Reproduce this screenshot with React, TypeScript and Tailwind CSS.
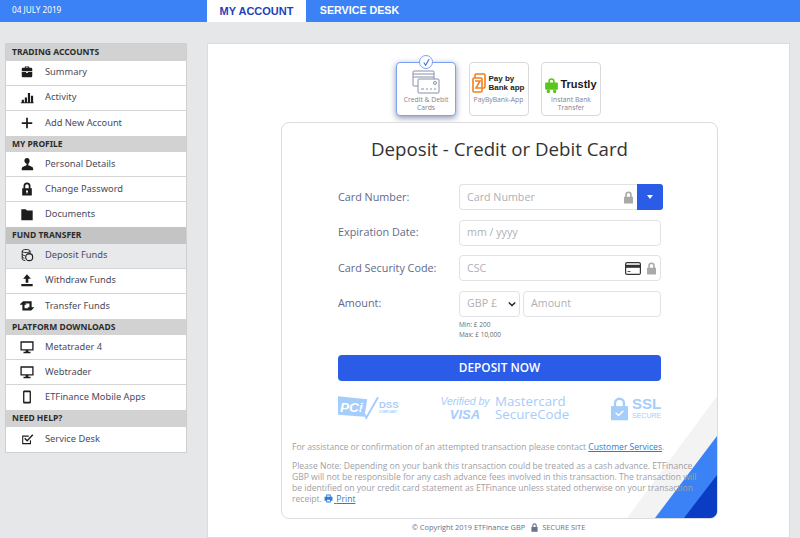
import React from "react";

const Ico = ({ children }: { children: React.ReactNode }) => (
  <svg viewBox="0 0 16 16" className="w-[14px] h-[14px]" fill="#1c1c1c">{children}</svg>
);

const icons: Record<string, React.ReactNode> = {
  case: <Ico><path d="M5.500 3V1.800h5V3H12.500c.8 0 1.500.7 1.500 1.500V7H2V4.500C2 3.700 2.700 3 3.500 3zM6.700 3h2.600v-.4H6.700zM2 8h5v1.200h2V8h5v4.500c0 .8-.7 1.500-1.500 1.500h-9C2.700 14 2 13.300 2 12.500z" /></Ico>,
  chart: <Ico><path d="M1 14h14.500v1H1zM2 11h2.500v3H2zM5.500 8.500H8V14H5.500zM9 3.500h2.500V14H9zM12.500 6.500H15V14h-2.500z" /></Ico>,
  plus: <Ico><path d="M7 2h2v5h5v2H9v5H7V9H2V7h5z" /></Ico>,
  user: <Ico><path d="M8 1c1.900 0 3 1.300 3 3.200 0 1.500-.7 2.800-1.500 3.500v1.800l4 1.700c.9.4 1.500 1.300 1.500 2.300V15H2v-1.500c0-1 .6-1.900 1.500-2.300l4-1.700V7.700C6.200 7 5 5.700 5 4.200 5 2.300 6.100 1 8 1z" /></Ico>,
  lock: <Ico><path fillRule="evenodd" d="M8 .5a4 4 0 0 1 4 4V7h1.500v8.500h-11V7H4V4.500a4 4 0 0 1 4-4zm0 2a2 2 0 0 0-2 2V7h4V4.500a2 2 0 0 0-2-2zm0 7a1.200 1.200 0 0 0-.6 2.200v1.300h1.200v-1.300A1.200 1.200 0 0 0 8 9.500z" /></Ico>,
  folder: <Ico><path d="M1.500 2.500h5L8 4h6.500v11h-13z" /></Ico>,
  coins: <Ico><path fill="none" stroke="#1c1c1c" strokeWidth="1.100" d="M2.500 3.500c0-1 2-1.800 4.500-1.800s4.500.8 4.500 1.800V6c0 .5-.6 1-1.500 1.300M2.500 3.500c0 1 2 1.800 4.500 1.800s4.500-.8 4.500-1.800M2.500 3.500v9c0 .9 1.500 1.600 3.500 1.800M2.500 7c0 .8 1.200 1.400 3 1.700M2.500 10c0 .7 1 1.300 2.500 1.600" /><circle cx="10.500" cy="10.500" r="4" fill="none" stroke="#1c1c1c" strokeWidth="1.300" /></Ico>,
  upload: <Ico><path d="M8 1.500l4.500 5H9.500V11h-3V6.500h-3zM1.500 12.500h13V15h-13z" /></Ico>,
  retweet: <Ico><path d="M3.500 2.500L7.500 6.500H5.200V10.500H11L13 13H2.700V6.500H-.5zM3.500 2.500H13.300V9.500H16.500L12.500 13.500 8.500 9.500H10.800V5H6z" /></Ico>,
  monitor: <Ico><path fillRule="evenodd" d="M.5 1.500h15V12h-6v1.500H12V15H4v-1.500h2.500V12h-6zM2 3v7.500h12V3z" /></Ico>,
  phone: <Ico><path fillRule="evenodd" d="M5 .5h6c.8 0 1.500.7 1.500 1.500v12c0 .8-.7 1.500-1.500 1.500H5c-.8 0-1.500-.7-1.500-1.500V2C3.500 1.200 4.200.5 5 .5zm0 2v11h6v-11z" /></Ico>,
  check: <Ico><path fillRule="evenodd" d="M2.500 4H10v1.300H3.700v7.400h7.600V9.500h1.300V14H2.500zM14 2.500l1.200 1.100-7 7.400-3.400-3.300 1.100-1.100 2.300 2.200z" /></Ico>,
};

const groups = [
  { title: "TRADING ACCOUNTS", bg: "bg-[#d2d2d2]", items: [["case", "Summary"], ["chart", "Activity"], ["plus", "Add New Account"]] },
  { title: "MY PROFILE", bg: "bg-[#d2d2d2]", items: [["user", "Personal Details"], ["lock", "Change Password"], ["folder", "Documents"]] },
  { title: "FUND TRANSFER", bg: "bg-[#c4c4c4]", items: [["coins", "Deposit Funds"], ["upload", "Withdraw Funds"], ["retweet", "Transfer Funds"]] },
  { title: "PLATFORM DOWNLOADS", bg: "bg-[#d2d2d2]", items: [["monitor", "Metatrader 4"], ["monitor", "Webtrader"], ["phone", "ETFinance Mobile Apps"]] },
  { title: "NEED HELP?", bg: "bg-[#d2d2d2]", items: [["check", "Service Desk"]] },
];

const Lock = ({ className = "w-[12px] h-[12px]", color = "#a9a9a9" }: { className?: string; color?: string }) => (
  <svg viewBox="0 0 16 16" className={className} fill={color}><path fillRule="evenodd" d="M8 .5a4 4 0 0 1 4 4V7h1.500v8.500h-11V7H4V4.500a4 4 0 0 1 4-4zm0 2a2 2 0 0 0-2 2V7h4V4.500a2 2 0 0 0-2-2z" /></svg>
);

const Sidebar = () => (
  <aside className="w-[182px] shrink-0 border border-[#cfcfcf] font-['Noto_Sans',sans-serif]">
    {groups.map((g) => (
      <div key={g.title}>
        <div className={`h-[16.500px] ${g.bg} pl-[6px] text-[8.500px] font-bold leading-[16.500px] text-[#2c2c2c]`}>{g.title}</div>
        {g.items.map(([icon, label]) => (
          <div
            key={label}
            className={`flex h-[25px] items-center border-b border-[#d4d4d4] pb-[1px] last:border-b-0 ${label === "Deposit Funds" ? "bg-[#e8e9eb]" : "bg-white"}`}
          >
            <span className="ml-[10px] flex w-[21px] justify-center">{icons[icon]}</span>
            <span className="ml-[8px] text-[9.300px] text-[#4a4a5c]">{label}</span>
          </div>
        ))}
      </div>
    ))}
  </aside>
);

const MethodCard = ({ active, label, children }: { active?: boolean; label: string; children: React.ReactNode }) => (
  <div
    className={`relative flex h-[54px] w-[60px] flex-col items-center rounded-[4px] border bg-white ${active ? "border-[#7aa2f5] shadow-[0_2px_6px_rgba(40,60,110,0.55)]" : "border-[#d8d8de]"}`}
  >
    <div className="flex h-[31px] w-full items-end justify-center">{children}</div>
    <div className="mt-[1.500px] text-center text-[6.800px] leading-[8.500px] text-[#84848c]">{label}</div>
  </div>
);

const Field = ({ label, children }: { label: string; children: React.ReactNode }) => (
  <div className="flex h-[26px] items-center">
    <div className="w-[121px] text-[10.800px] text-[#62698a]">{label}</div>
    {children}
  </div>
);

const inputBox = "flex h-[26px] items-center rounded-[4px] border border-[#e1e1e8] bg-white text-[10.700px] text-[#b0b0b6]";

const Form = () => (
  <section className="relative h-[397px] w-[437px] overflow-hidden rounded-[8px] border border-[#dcdce0] bg-white">
    <div className="absolute right-0 bottom-0 h-[122px] w-[90px] bg-[#f3f3f4] [clip-path:polygon(100%_0,100%_100%,0_100%)]" />
    <div className="absolute right-0 bottom-0 h-[82px] w-[62px] bg-[#3b82f6] [clip-path:polygon(100%_0,100%_100%,0_100%)]" />
    <div className="absolute right-0 bottom-0 h-[43px] w-[33px] bg-[#0a3cc4] [clip-path:polygon(100%_0,100%_100%,0_100%)]" />

    <div className="relative">
      <h1 className="pt-[12px] text-center text-[18.700px] leading-[28px] text-[#333]">Deposit - Credit or Debit Card</h1>
      <div className="ml-[56px] mt-[21px] flex flex-col gap-[9.500px]">
        <Field label="Card Number:">
          <div className="flex w-[204px]">
            <div className={`${inputBox} flex-1 rounded-r-none border-r-0 pl-[7px]`}>
              <span className="flex-1">Card Number</span>
              <Lock className="mr-[2px] h-[13px] w-[13px]" />
            </div>
            <div className="flex h-[26px] w-[26px] items-center justify-center rounded-r-[3px] bg-[#2a5ce8]">
              <div className="h-0 w-0 border-x-[3px] border-t-[4px] border-x-transparent border-t-white" />
            </div>
          </div>
        </Field>
        <Field label="Expiration Date:">
          <div className={`${inputBox} w-[202px] pl-[7px]`}>mm / yyyy</div>
        </Field>
        <Field label="Card Security Code:">
          <div className={`${inputBox} w-[202px] pl-[7px]`}>
            <span className="flex-1">CSC</span>
            <svg viewBox="0 0 16 13" className="mr-[4px] h-[13px] w-[16px]">
              <rect x=".6" y=".6" width="14.800" height="11.800" rx="1.500" fill="#fff" stroke="#333" strokeWidth="1.200" />
              <rect x="1" y="2.800" width="14" height="3" fill="#333" />
              <rect x="2.500" y="9" width="3" height="1" fill="#555" />
            </svg>
            <Lock className="mr-[2px] h-[13px] w-[13px]" />
          </div>
        </Field>
        <Field label="Amount:">
          <div className="flex w-[202px] gap-[3px]">
            <div className={`${inputBox} w-[61px] justify-between pl-[7px] pr-[3px] text-[#62698a]`}>
              <span>GBP £</span>
              <svg viewBox="0 0 10 6" className="h-[6px] w-[8px]" fill="none" stroke="#222" strokeWidth="1.800"><path d="M1 1l4 4 4-4" /></svg>
            </div>
            <div className={`${inputBox} flex-1 pl-[7px]`}>Amount</div>
          </div>
        </Field>
      </div>
      <div className="ml-[177px] mt-[3px] text-[6.500px] leading-[10px] text-[#6b6b6b]">
        <div>Min: £ 200</div>
        <div>Max: £ 10,000</div>
      </div>
      <button className="ml-[56px] mt-[15px] block h-[26px] w-[323px] rounded-[4px] bg-[#2a5ce8] text-center text-[11.800px] font-semibold text-white">DEPOSIT NOW</button>

      <div className="ml-[56px] mt-[14px] flex h-[27px] items-center text-[#a5cdfb]">
        <div className="flex w-[64px] items-center">
          <svg viewBox="0 0 42 26" className="h-[26px] w-[41px] shrink-0">
            <path d="M0 1l30 3-3 18L0 20z" fill="#a5cdfb" />
            <text x="2" y="17" fontSize="14" fontWeight="700" fontStyle="italic" fill="#fff" fontFamily="Liberation Sans">PCi</text>
            <path d="M24 14l5 9L41 2" fill="none" stroke="#a5cdfb" strokeWidth="2" />
          </svg>
          <div className="-mt-[2px] font-['Liberation_Sans',sans-serif] text-[9.500px] font-bold leading-[10px]">DSS<div className="text-[3px] leading-[4px]">COMPLIANT</div></div>
        </div>
        <div className="ml-[38px] w-[50px] whitespace-nowrap text-center font-['Liberation_Sans',sans-serif] italic leading-[13px]">
          <div className="text-[10.500px]">Verified by</div>
          <div className="text-[13px] font-bold">VISA</div>
        </div>
        <div className="ml-[5px] w-[72px] whitespace-nowrap text-[13.300px] leading-[13.500px]">
          <div>Mastercard</div>
          <div>SecureCode</div>
        </div>
        <div className="ml-[44px] flex items-center gap-[4px]">
          <svg viewBox="0 0 18 26" className="h-[26px] w-[17px]" fill="#a5cdfb">
            <path d="M3 12V8a6 6 0 0 1 12 0v4h-2.500V8a3.500 3.500 0 0 0-7 0v4z" />
            <rect y="11" width="18" height="15" />
            <path d="M5 18l3 3 5-5" fill="none" stroke="#fff" strokeWidth="1.600" />
          </svg>
          <div className="font-['Liberation_Sans',sans-serif]">
            <div className="text-[15px] font-bold leading-[16px]">SSL</div>
            <div className="text-[7px] leading-[8px]">SECURE</div>
          </div>
        </div>
      </div>

      <div className="ml-[10px] mt-[20px] text-[8.550px] leading-[11px] text-[#a0a0a6]">
        <p>For assistance or confirmation of an attempted transaction please contact <a className="text-[#2f7ad8] underline">Customer Services</a>.</p>
        <p className="mt-[8px] w-[408px]">
          Please Note: Depending on your bank this transaction could be treated as a cash advance. ETFinance GBP will not be responsible for any cash advance fees involved in this transaction. The transaction will be identified on your credit card statement as ETFinance unless stated otherwise on your transaction receipt.{" "}
          <a className="text-[#2f7ad8] underline">
            <svg viewBox="0 0 16 16" className="mr-[1px] inline h-[9px] w-[9px] align-[-1px]" fill="#2f7ad8"><path fillRule="evenodd" d="M4 1h8v4h3v7h-3v3H4v-3H1V5h3zm1.500 1.500V5h5V2.500zM5.500 10v3.500h5V10z" /></svg>
            {" "}Print
          </a>
        </p>
      </div>
    </div>
  </section>
);

export default function App() {
  return (
    <div className="flex h-[538px] w-[800px] flex-col overflow-hidden bg-[#e6e7e9] font-['Open_Sans',sans-serif]">
      <header className="flex h-[22px] shrink-0 bg-[#3b82f6] font-['Liberation_Sans',sans-serif]">
        <div className="w-[207px] pl-[12px] font-['Noto_Sans',sans-serif] text-[8.200px] leading-[20px] text-white">04 JULY 2019</div>
        <div className="w-[99px] bg-white text-center text-[11px] font-bold leading-[22px] text-[#1f3fb8]">MY ACCOUNT</div>
        <div className="w-[107px] text-center text-[10.700px] font-bold leading-[20px] text-white">SERVICE DESK</div>
      </header>
      <div className="flex flex-1 items-start gap-[20px] pl-[5px] pt-[21px]">
        <Sidebar />
        <main className="flex h-[495px] w-[583px] flex-col items-center border border-[#dcdcde] bg-white">
          <div className="mt-[18px] flex gap-[12.500px]">
            <MethodCard active label="Credit & Debit Cards">
              <div className="absolute -top-[8px] left-[22px] z-10 flex h-[14px] w-[14px] items-center justify-center rounded-full border border-[#7aa2f5] bg-white">
                <svg viewBox="0 0 10 10" className="h-[9px] w-[9px]" fill="none" stroke="#3b6fe0" strokeWidth="1.200"><path d="M2 5l2 3 4-7" /></svg>
              </div>
              <svg viewBox="0 0 28 24" className="h-[24px] w-[28px]" fill="#fff" stroke="#8890a8" strokeWidth="1">
                <rect x="1" y="1" width="21" height="15" rx="1" />
                <path d="M1 4h21M1 7h21" />
                <rect x="6" y="9" width="21" height="14" rx="1" />
                <circle cx="23" cy="13" r="1.500" />
                <path d="M9 19h3M14 19h2M18 19h2M22 19h2" />
              </svg>
            </MethodCard>
            <MethodCard label="PayByBank-App">
              <div className="flex items-center gap-[2px] pb-[1px]">
                <svg viewBox="0 0 14 20" className="h-[20px] w-[14px]" fill="none" stroke="#f08020" strokeWidth="1.600">
                  <rect x="3" y="1" width="10" height="14" rx="1" />
                  <rect x="1" y="5" width="9" height="14" rx="1" fill="#fff" />
                  <path d="M3 8h5l-4 7h5" />
                </svg>
                <div className="whitespace-nowrap font-['Liberation_Sans',sans-serif] text-[8px] font-bold leading-[9px] text-[#222]">Pay by<br />Bank app</div>
              </div>
            </MethodCard>
            <MethodCard label="Instant Bank Transfer">
              <div className="flex items-center gap-[2px] pb-[1px]">
                <svg viewBox="0 0 12 16" className="h-[17px] w-[13px]" fill="#5bc61a">
                  <path d="M3 7V5a3 3 0 0 1 6 0v2H7.500V5a1.500 1.500 0 0 0-3 0v2z" />
                  <rect x="0" y="6" width="12" height="7" rx="1" />
                  <rect x="1.500" y="13" width="3" height="3" rx="1" />
                  <rect x="7.500" y="13" width="3" height="3" rx="1" />
                </svg>
                <span className="font-['Liberation_Sans',sans-serif] text-[11px] font-bold text-[#1a1a1a]">Trustly</span>
              </div>
            </MethodCard>
          </div>
          <div className="ml-[2px] mt-[6px]"><Form /></div>
          <footer className="mt-[3px] flex items-center gap-[3px] text-[7.400px] text-[#6a7090]">
            <span>© Copyright 2019 ETFinance GBP</span>
            <Lock className="ml-[2px] h-[9px] w-[9px]" color="#6a7090" />
            <span>SECURE SITE</span>
          </footer>
        </main>
      </div>
    </div>
  );
}
